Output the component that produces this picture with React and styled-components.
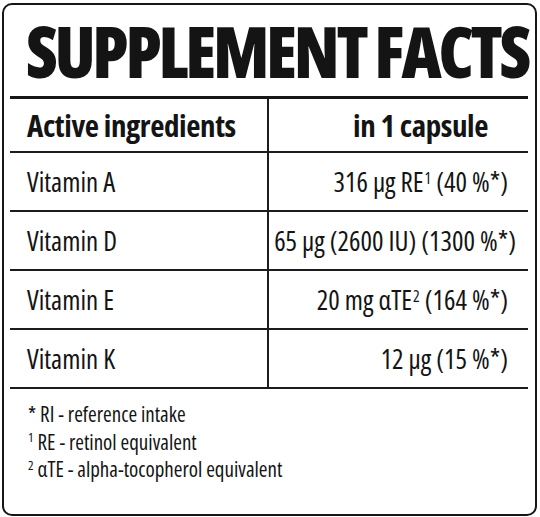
import React from "react";
import styled, { createGlobalStyle } from "styled-components";

const GlobalStyle = createGlobalStyle`
  html, body { margin: 0; padding: 0; background: #fff; }
  body {
    font-family: "Open Sans", Roboto, "Liberation Sans", sans-serif;
    font-stretch: condensed;
    color: #141414;
  }
`;

const Card = styled.div`
  box-sizing: border-box;
  width: 535px;
  height: 513px;
  margin: 3px 0 0 2px;
  border: 2px solid #161616;
  border-radius: 10px;
  display: flex;
  flex-direction: column;
`;

const Title = styled.h1`
  margin: 0;
  height: 91px;
  padding: 1px 0 0 22px;
  box-sizing: border-box;
  display: flex;
  align-items: center;
  font-size: 70px;
  line-height: 1;
  font-weight: 800;
  font-stretch: condensed;
  letter-spacing: -3.3px;
  white-space: nowrap;
`;

const Table = styled.div`
  margin: 0 7px 0 6px;
  border-top: 3px solid #161616;
  display: flex;
  flex-direction: column;
`;

const Row = styled.div`
  display: grid;
  grid-template-columns: 259px 1fr;
  height: ${(p) => p.$h}px;
  box-sizing: border-box;
  border-bottom: 2px solid #1c1c1c;
`;

const Cell = styled.div`
  display: flex;
  align-items: center;
  justify-content: ${(p) => (p.$right ? "flex-end" : "flex-start")};
  padding: ${(p) => (p.$right ? `0 ${p.$pr}px 0 0` : "0 0 0 17px")};
  border-right: ${(p) => (p.$right ? "none" : "2px solid #1c1c1c")};
  font-size: ${(p) => (p.$head ? 31 : 27)}px;
  font-weight: ${(p) => (p.$head ? 700 : 400)};
  letter-spacing: ${(p) => (p.$head ? "-0.4px" : "0")};
  white-space: pre;
  line-height: 1;
`;

const Sup = styled.sup`
  font-size: 0.58em;
  line-height: 0;
  position: relative;
  top: -0.22em;
  margin: 0 5px 0 1px;
`;

const Notes = styled.div`
  padding: 12px 0 0 24px;
  font-size: 21px;
  line-height: 27.5px;
`;

const Note = styled.div`
  white-space: nowrap;
`;

const NoteSup = styled.span`
  display: inline-block;
  font-size: 0.62em;
  line-height: 1;
  vertical-align: 0.55em;
  margin-right: 4px;
`;

const rows = [
  { name: "Vitamin A", value: <>316 µg RE<Sup>1</Sup>(40 %*)</>, pr: 20 },
  { name: "Vitamin D", value: <>65 µg (2600 IU) (1300 %*)</>, pr: 12 },
  { name: "Vitamin E", value: <>20 mg αTE<Sup>2</Sup>(164 %*)</>, pr: 20 },
  { name: "Vitamin K", value: <>12 µg (15 %*)</>, pr: 20 },
];

export default function App() {
  return (
    <>
      <GlobalStyle />
      <Card>
        <Title>SUPPLEMENT FACTS</Title>
        <Table>
          <Row $h={54}>
            <Cell $head>Active ingredients</Cell>
            <Cell $head $right $pr={40}>in 1 capsule</Cell>
          </Row>
          {rows.map((r) => (
            <Row key={r.name} $h={59}>
              <Cell>{r.name}</Cell>
              <Cell $right $pr={r.pr}>{r.value}</Cell>
            </Row>
          ))}
        </Table>
        <Notes>
          <Note>* RI - reference intake</Note>
          <Note><NoteSup>1</NoteSup>RE - retinol equivalent</Note>
          <Note><NoteSup>2</NoteSup>αTE - alpha-tocopherol equivalent</Note>
        </Notes>
      </Card>
    </>
  );
}
